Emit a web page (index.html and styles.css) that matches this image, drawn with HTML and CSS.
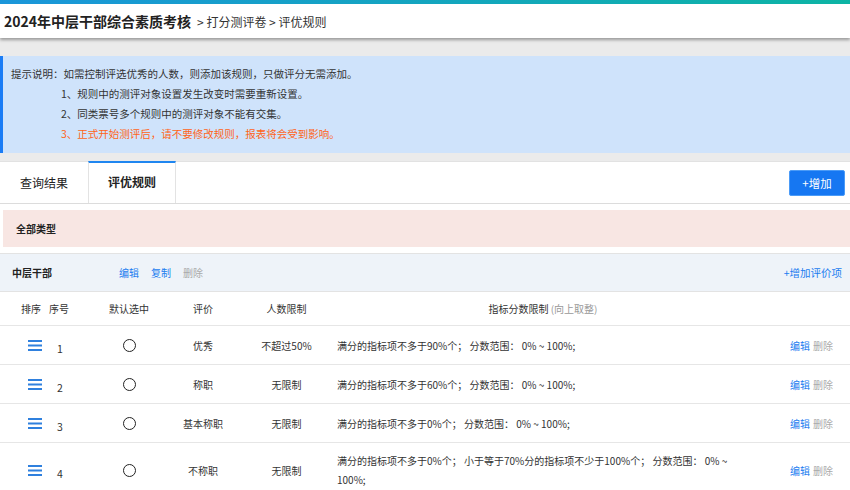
FILE: index.html
```html
<!DOCTYPE html>
<html lang="zh-CN">
<head>
  <meta charset="UTF-8">
  <title>评优规则</title>
  <link rel="stylesheet" href="styles.css">
</head>
<body>

<div class="topbar">
  <span class="exam-title">2024年中层干部综合素质考核</span>
  <span class="crumb">&gt; 打分测评卷 &gt; 评优规则</span>
</div>

<div class="page">
  <div class="tips">
    <p>提示说明：如需控制评选优秀的人数，则添加该规则，只做评分无需添加。</p>
    <p class="indent">1、规则中的测评对象设置发生改变时需要重新设置。</p>
    <p class="indent">2、同类票号多个规则中的测评对象不能有交集。</p>
    <p class="indent warn">3、正式开始测评后，请不要修改规则，报表将会受到影响。</p>
  </div>

  <div class="panel">
    <div class="tabs">
      <div class="tab">查询结果</div>
      <div class="tab active">评优规则</div>
      <button class="btn-add">+增加</button>
    </div>

    <div class="type-bar">全部类型</div>

    <div class="group">
      <div class="group-head">
        <span class="group-name">中层干部</span>
        <a class="link">编辑</a>
        <a class="link">复制</a>
        <a class="link disabled">删除</a>
        <a class="link add-item">+增加评价项</a>
      </div>

      <div class="row head">
        <div class="c-sort">排序</div>
        <div class="c-no">序号</div>
        <div class="c-def">默认选中</div>
        <div class="c-name">评价</div>
        <div class="c-limit">人数限制</div>
        <div class="c-desc">指标分数限制 <span class="muted">(向上取整)</span></div>
        <div class="c-ops"></div>
      </div>

      <div class="row">
        <div class="c-sort"><svg class="drag" width="14" height="11" viewBox="0 0 14 11"><rect y="0" width="14" height="2"/><rect y="4.5" width="14" height="2"/><rect y="9" width="14" height="2"/></svg></div>
        <div class="c-no">1</div>
        <div class="c-def"><span class="radio"></span></div>
        <div class="c-name">优秀</div>
        <div class="c-limit">不超过50%</div>
        <div class="c-desc">满分的指标项不多于90%个； 分数范围： 0% ~ 100%;</div>
        <div class="c-ops"><a class="link">编辑</a><a class="link disabled">删除</a></div>
      </div>

      <div class="row">
        <div class="c-sort"><svg class="drag" width="14" height="11" viewBox="0 0 14 11"><rect y="0" width="14" height="2"/><rect y="4.5" width="14" height="2"/><rect y="9" width="14" height="2"/></svg></div>
        <div class="c-no">2</div>
        <div class="c-def"><span class="radio"></span></div>
        <div class="c-name">称职</div>
        <div class="c-limit">无限制</div>
        <div class="c-desc">满分的指标项不多于60%个； 分数范围： 0% ~ 100%;</div>
        <div class="c-ops"><a class="link">编辑</a><a class="link disabled">删除</a></div>
      </div>

      <div class="row">
        <div class="c-sort"><svg class="drag" width="14" height="11" viewBox="0 0 14 11"><rect y="0" width="14" height="2"/><rect y="4.5" width="14" height="2"/><rect y="9" width="14" height="2"/></svg></div>
        <div class="c-no">3</div>
        <div class="c-def"><span class="radio"></span></div>
        <div class="c-name">基本称职</div>
        <div class="c-limit">无限制</div>
        <div class="c-desc">满分的指标项不多于0%个； 分数范围： 0% ~ 100%;</div>
        <div class="c-ops"><a class="link">编辑</a><a class="link disabled">删除</a></div>
      </div>

      <div class="row">
        <div class="c-sort"><svg class="drag" width="14" height="11" viewBox="0 0 14 11"><rect y="0" width="14" height="2"/><rect y="4.5" width="14" height="2"/><rect y="9" width="14" height="2"/></svg></div>
        <div class="c-no">4</div>
        <div class="c-def"><span class="radio"></span></div>
        <div class="c-name">不称职</div>
        <div class="c-limit">无限制</div>
        <div class="c-desc">满分的指标项不多于0%个； 小于等于70%分的指标项不少于100%个； 分数范围： 0% ~ 100%;</div>
        <div class="c-ops"><a class="link">编辑</a><a class="link disabled">删除</a></div>
      </div>
    </div>
  </div>
</div>

</body>
</html>
```

FILE: styles.css
```css
body {
  margin: 0;
  font-family: "Noto Sans CJK SC", "Noto Sans", sans-serif;
  background: #ebebeb;
  color: #333;
  overflow: hidden;
}

.topbar {
  height: 34px;
  border-top: 4px solid #1a9ad8;
  border-image: linear-gradient(90deg, #1a96da, #0db4a4) 1;
  background: #fff;
  box-shadow: 0 2px 3px rgba(0, 0, 0, 0.35);
  display: flex;
  align-items: center;
  padding-left: 4px;
  position: relative;
}

.exam-title {
  font-size: 14px;
  font-weight: bold;
  color: #222;
  margin-right: 6px;
}

.crumb {
  font-size: 12px;
  color: #333;
}

.page {
  margin-top: 18px;
}

.tips {
  background: #cfe3fb;
  border-left: 3px solid #1a7cf5;
  padding: 8px 8px 9px;
  font-size: 10.5px;
  line-height: 20px;
  color: #333;
}

.tips p {
  margin: 0;
}

.tips .indent {
  padding-left: 50px;
}

.tips .warn {
  color: #ff6418;
}

.panel {
  margin-top: 8px;
  background: #fff;
  border-top: 1px solid #e2e2e2;
}

.tabs {
  display: flex;
  align-items: center;
  height: 41px;
  border-bottom: 1px solid #dcdcdc;
}

.tab {
  width: 88px;
  height: 41px;
  box-sizing: border-box;
  line-height: 41px;
  text-align: center;
  font-size: 12px;
  color: #222;
}

.tab.active {
  border-top: 2px solid #1f86f0;
  border-left: 1px solid #e3e3e3;
  border-right: 1px solid #e3e3e3;
  line-height: 38px;
  font-weight: bold;
  margin-top: -1px;
  height: 42px;
}

.btn-add {
  margin-left: auto;
  margin-right: 5px;
  width: 56px;
  height: 26px;
  border: 1px solid #4b9bf7;
  border-radius: 2px;
  background: #1677f2;
  color: #fff;
  font-family: inherit;
  font-size: 11.5px;
  padding: 0;
  cursor: pointer;
}

.type-bar {
  margin: 6px 0 0 3px;
  height: 37px;
  line-height: 37px;
  background: #f8e6e3;
  padding-left: 13px;
  font-size: 10px;
  font-weight: bold;
  color: #222;
}

.group {
  margin-top: 6px;
  border-top: 1px solid #e3e3e3;
}

.group-head {
  display: flex;
  align-items: center;
  height: 37px;
  background: #eef3f9;
  border-bottom: 1px solid #e3e3e3;
  padding: 0 8px 0 12px;
  font-size: 10px;
}

.group-name {
  width: 107px;
  font-weight: bold;
  color: #222;
}

.group-head .link {
  margin-right: 12px;
}

.group-head .add-item {
  margin-left: auto;
  margin-right: 0;
  font-size: 10.5px;
}

.link {
  color: #1a7cf0;
  cursor: pointer;
}

.link.disabled {
  color: #aaa;
}

.row {
  display: grid;
  grid-template-columns: 45px 28px 97px 66px 101px 438px 75px;
  align-items: center;
  min-height: 38px;
  border-bottom: 1px solid #e6e6e6;
  font-size: 10px;
  color: #333;
}

.row.head {
  min-height: 33px;
}

.c-sort {
  display: flex;
  padding-left: 28px;
}

.head .c-sort {
  padding-left: 21px;
}

.c-no {
  padding: 6px 0 0 12px;
  font-size: 10.5px;
}

.head .c-no {
  padding: 0 0 0 4px;
  font-size: 10px;
}

.c-def {
  display: flex;
  justify-content: center;
  padding-left: 15px;
}

.c-name,
.c-limit {
  text-align: center;
  white-space: nowrap;
}

.c-desc {
  padding: 8px 40px 8px 0;
  line-height: 19px;
}

.head .c-desc {
  text-align: center;
  padding: 0 26px 0 0;
}

.muted {
  color: #999;
}

.c-ops {
  padding-left: 15px;
  white-space: nowrap;
}

.c-ops .link {
  margin-right: 3px;
}

.drag {
  fill: #2f80de;
}

.radio {
  width: 13px;
  height: 13px;
  box-sizing: border-box;
  border: 1.3px solid #222;
  border-radius: 50%;
}
```
